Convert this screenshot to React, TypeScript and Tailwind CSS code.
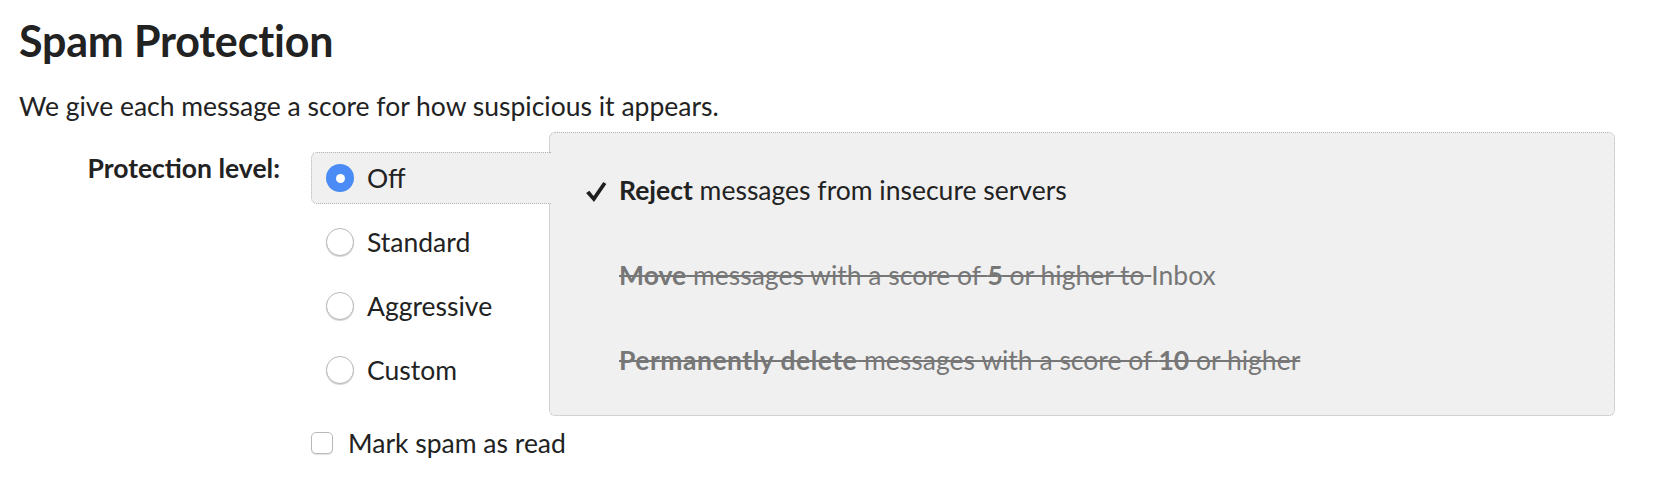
import React from "react";

function Radio({ checked }: { checked?: boolean }) {
  if (checked) {
    return (
      <span className="flex h-[28px] w-[28px] shrink-0 items-center justify-center rounded-full bg-[#4b8bf5]">
        <span className="h-[9px] w-[9px] rounded-full bg-white" />
      </span>
    );
  }
  return (
    <span className="h-[28px] w-[28px] shrink-0 rounded-full border border-[#b9b9b9] bg-white shadow-[0_1px_1px_rgba(0,0,0,0.18)]" />
  );
}

function Check() {
  return (
    <svg width="22" height="22" viewBox="0 0 20 20" className="mt-[3px]">
      <path d="M1 11 L4 8.8 L7.8 13.6 L16.6 0.8 L19.4 2.8 L8.2 19 Z" fill="#1f1f1f" />
    </svg>
  );
}

export default function App() {
  const options = ["Off", "Standard", "Aggressive", "Custom"];

  return (
    <div className="min-h-[490px] bg-white px-[19px] pt-[14px] font-['Lato',sans-serif] text-[26.5px] leading-[42px] text-[#222]">
      <h1 className="text-[43px] font-bold leading-[54px] tracking-[-0.2px]">Spam Protection</h1>
      <p className="mt-[17px]">We give each message a score for how suspicious it appears.</p>

      <div className="mt-[5px] flex">
        <div className="w-[261px] pt-[15px] text-right font-bold">Protection level:</div>
        <div className="ml-[31px] flex flex-col">
          <div className="flex items-start">
            {/* radio options */}
            <div className="relative z-10 flex w-[238px] flex-col gap-[12px] pt-[20px]">
              {options.map((o, i) => (
                <label
                  key={o}
                  className={
                    i === 0
                      ? "flex h-[52px] w-[240px] items-center gap-[13px] rounded-l-[6px] border-y border-l border-dotted border-[#b4b4b4] bg-[#f0f0f0] pl-[14px]"
                      : "flex h-[52px] items-center gap-[13px] pl-[15px]"
                  }
                >
                  <Radio checked={i === 0} />
                  <span>{o}</span>
                </label>
              ))}
            </div>

            {/* actions panel */}
            <div className="h-[284px] w-[1066px] rounded-[6px] border border-dotted border-[#b4b4b4] bg-[#f0f0f0] pl-[35px] pt-[36px]">
              <div className="flex flex-col gap-[43px]">
                <div className="flex items-center">
                  <span className="flex w-[34px] items-center">
                    <Check />
                  </span>
                  <span>
                    <b>Reject</b> messages from insecure servers
                  </span>
                </div>
                <div className="pl-[34px] text-[#777]">
                  <span className="line-through">
                    <b>Move</b> messages with a score of <b>5</b> or higher to{" "}
                  </span>
                  Inbox
                </div>
                <div className="pl-[34px] text-[#777] line-through">
                  <b className="tracking-[0.5px]">Permanently delete</b> messages with a score of <b>10</b> or higher
                </div>
              </div>
            </div>
          </div>

          <label className="mt-[6px] flex items-center gap-[15px]">
            <span className="h-[22px] w-[22px] rounded-[5px] border border-[#b9b9b9] bg-white shadow-[0_1px_1px_rgba(0,0,0,0.12)]" />
            <span>Mark spam as read</span>
          </label>
        </div>
      </div>
    </div>
  );
}
